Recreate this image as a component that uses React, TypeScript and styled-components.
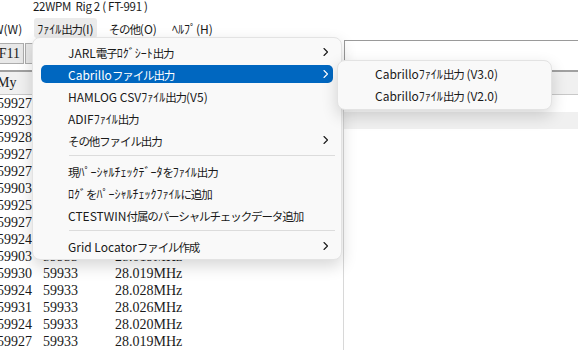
import { createGlobalStyle, styled } from 'styled-components'

const GlobalStyle = createGlobalStyle`
	html, body {
		margin: 0;
		padding: 0;
		background: #ffffff;
	}
	body {
		width: 578px;
		height: 352px;
		overflow: hidden;
		font-family: 'Noto Sans CJK JP', 'Noto Sans', sans-serif;
		color: #1a1a1a;
	}
`

const rows = [
	['59927', '59933', '28.021MHz'],
	['59923', '59933', '28.024MHz'],
	['59928', '59933', '28.019MHz'],
	['59927', '59933', '28.022MHz'],
	['59927', '59933', '28.020MHz'],
	['59903', '59933', '28.025MHz'],
	['59925', '59933', '28.019MHz'],
	['59927', '59933', '28.023MHz'],
	['59924', '59933', '28.021MHz'],
	['59903', '59933', '28.019MHz'],
	['59930', '59933', '28.019MHz'],
	['59924', '59933', '28.028MHz'],
	['59931', '59933', '28.026MHz'],
	['59924', '59933', '28.020MHz'],
	['59927', '59933', '28.019MHz'],
]

type Item = { label: string; sub?: boolean; active?: boolean; sep?: boolean }

const fileMenu: Item[] = [
	{ label: 'JARL電子ﾛｸﾞｼｰﾄ出力', sub: true },
	{ label: 'Cabrilloファイル出力', sub: true, active: true },
	{ label: 'HAMLOG CSVﾌｧｲﾙ出力(V5)' },
	{ label: 'ADIFﾌｧｲﾙ出力' },
	{ label: 'その他ファイル出力', sub: true },
	{ label: '', sep: true },
	{ label: '現ﾊﾟｰｼｬﾙﾁｪｯｸﾃﾞｰﾀをﾌｧｲﾙ出力' },
	{ label: 'ﾛｸﾞをﾊﾟｰｼｬﾙﾁｪｯｸﾌｧｲﾙに追加' },
	{ label: 'CTESTWIN付属のパーシャルチェックデータ追加' },
	{ label: '', sep: true },
	{ label: 'Grid Locatorファイル作成', sub: true },
]

// full-width kana/kanji are set tighter, like the proportional UI font of the original
const wideRun = /([\u3040-\u30ff\u4e00-\u9fff]+)/
function Label({ text }: { text: string }) {
	return (
		<span>
			{text.split(wideRun).map((part, i) =>
				i % 2 === 1 ? <Wide key={i}>{part}</Wide> : part
			)}
		</span>
	)
}

function Chevron({ color }: { color: string }) {
	return (
		<svg width='6' height='10' viewBox='0 0 6 10'>
			<polyline
				points='1,1.5 4.5,5 1,8.5'
				fill='none'
				stroke={color}
				strokeWidth='1.1'
				strokeLinecap='round'
				strokeLinejoin='round'
			/>
		</svg>
	)
}

export default function App() {
	return (
		<Window>
			<GlobalStyle />
			<TitleBar>22WPM&nbsp; Rig 2 ( FT-991 )</TitleBar>
			<MenuBar>
				<MenuBarItem>W(W)</MenuBarItem>
				<MenuBarItem $active>
					<Label text='ﾌｧｲﾙ出力(I)' />
				</MenuBarItem>
				<MenuBarItem>
					<Label text='その他(O)' />
				</MenuBarItem>
				<MenuBarItem>ﾍﾙﾌﾟ(H)</MenuBarItem>
			</MenuBar>
			<Toolbar>
				<KeyButton>F11</KeyButton>
				<KeyButton>F12</KeyButton>
				<EditBox />
			</Toolbar>
			<GridHeader>
				<HeaderCell $width={46}>My</HeaderCell>
			</GridHeader>
			<GridBody>
				<LeftGrid>
					{rows.map((r, i) => (
						<Row key={i}>
							<Cell $width={46}>{r[0]}</Cell>
							<Cell $width={72}>{r[1]}</Cell>
							<Cell>{r[2]}</Cell>
						</Row>
					))}
				</LeftGrid>
				<RightPane>
					<PaneBand />
				</RightPane>
			</GridBody>

			<Popup>
				{fileMenu.map((it, i) =>
					it.sep ? (
						<Separator key={i} />
					) : (
						<MenuItem key={i} $active={it.active}>
							<Label text={it.label} />
							{it.sub && <Chevron color={it.active ? '#ffffff' : '#1a1a1a'} />}
						</MenuItem>
					)
				)}
			</Popup>
			<SubPopup>
				<SubItem>
					<Label text='Cabrilloﾌｧｲﾙ出力 (V3.0)' />
				</SubItem>
				<SubItem>
					<Label text='Cabrilloﾌｧｲﾙ出力 (V2.0)' />
				</SubItem>
			</SubPopup>
		</Window>
	)
}

const Window = styled.div`
	position: relative;
	width: 578px;
	height: 352px;
	overflow: hidden;
	background: #ffffff;
`

const Wide = styled.span`
	font-size: 11.5px;
	letter-spacing: -1.1px;
`

const TitleBar = styled.div`
	height: 18px;
	padding-left: 33px;
	font-size: 11.5px;
	line-height: 12px;
	letter-spacing: -0.3px;
	white-space: pre;
`

const MenuBar = styled.div`
	display: flex;
	align-items: center;
	height: 20px;
	margin-left: -10px;
	gap: 9px;
`

const MenuBarItem = styled.div<{ $active?: boolean }>`
	height: 20px;
	line-height: 21px;
	padding: 0 3px;
	font-size: 12px;
	border-radius: 3px;
	background: ${p => (p.$active ? '#ebebeb' : 'transparent')};
`

const Toolbar = styled.div`
	display: flex;
	align-items: flex-start;
	height: 32px;
	padding-top: 5px;
	box-sizing: border-box;
	margin-left: -13px;
`

const KeyButton = styled.div`
	width: 37px;
	height: 21px;
	box-sizing: border-box;
	border: 1px solid #adadad;
	background: #e8e8e8;
	margin-right: 1px;
	padding-right: 3px;
	font-family: 'Liberation Serif', serif;
	font-size: 14px;
	line-height: 19px;
	text-align: right;
`

const EditBox = styled.div`
	margin-left: auto;
	width: 233px;
	height: 20px;
	margin-top: -3px;
	border-top: 1px solid #9a9a9a;
	border-left: 1px solid #9a9a9a;
`

const GridHeader = styled.div`
	display: flex;
	height: 22px;
	border-top: 2px solid #a0a0a0;
	border-bottom: 1px solid #c8c8c8;
	background: #f0f0f0;
	margin-left: -3px;
	font-family: 'Liberation Serif', serif;
	font-size: 14px;
	line-height: 22px;
`

const HeaderCell = styled.div<{ $width?: number }>`
	width: ${p => (p.$width ? `${p.$width}px` : 'auto')};
	border-right: 1px solid #c8c8c8;
	box-sizing: border-box;
`

const GridBody = styled.div`
	display: flex;
`

const LeftGrid = styled.div`
	width: 346px;
	margin-left: -3px;
	font-family: 'Liberation Serif', serif;
	font-size: 14px;
`

const Row = styled.div`
	display: flex;
	height: 17px;
	line-height: 17px;
`

const Cell = styled.div<{ $width?: number }>`
	width: ${p => (p.$width ? `${p.$width}px` : 'auto')};
	flex: ${p => (p.$width ? 'none' : '1')};
	white-space: nowrap;
`

const RightPane = styled.div`
	flex: 1;
	border-left: 1px solid #d8d8d8;
	padding-top: 17px;
`

const PaneBand = styled.div`
	height: 17px;
	background: #f0f0f0;
`

const Popup = styled.div`
	position: absolute;
	left: 32px;
	top: 37px;
	width: 310px;
	box-sizing: border-box;
	display: flex;
	flex-direction: column;
	padding: 3px 0 2px;
	background: #f9f9f9;
	border: 1px solid #e3e3e3;
	border-radius: 8px;
	box-shadow: 0 6px 16px rgba(0, 0, 0, 0.16);
`

const MenuItem = styled.div<{ $active?: boolean }>`
	display: flex;
	align-items: center;
	justify-content: space-between;
	height: 18px;
	margin: 2px 8px;
	padding: 0 4px 0 27px;
	border-radius: 5px;
	font-size: 12px;
	color: ${p => (p.$active ? '#ffffff' : '#1a1a1a')};
	background: ${p => (p.$active ? '#0067c0' : 'transparent')};
`

const Separator = styled.div`
	height: 1px;
	margin: 4px 6px 4px 36px;
	background: #dcdcdc;
`

const SubPopup = styled.div`
	position: absolute;
	left: 337px;
	top: 60px;
	width: 215px;
	box-sizing: border-box;
	padding: 2px 0;
	background: #f9f9f9;
	border: 1px solid #e3e3e3;
	border-radius: 8px;
	box-shadow: 0 6px 16px rgba(0, 0, 0, 0.16);
`

const SubItem = styled.div`
	height: 22px;
	line-height: 22px;
	padding-left: 37px;
	font-size: 12px;
`
